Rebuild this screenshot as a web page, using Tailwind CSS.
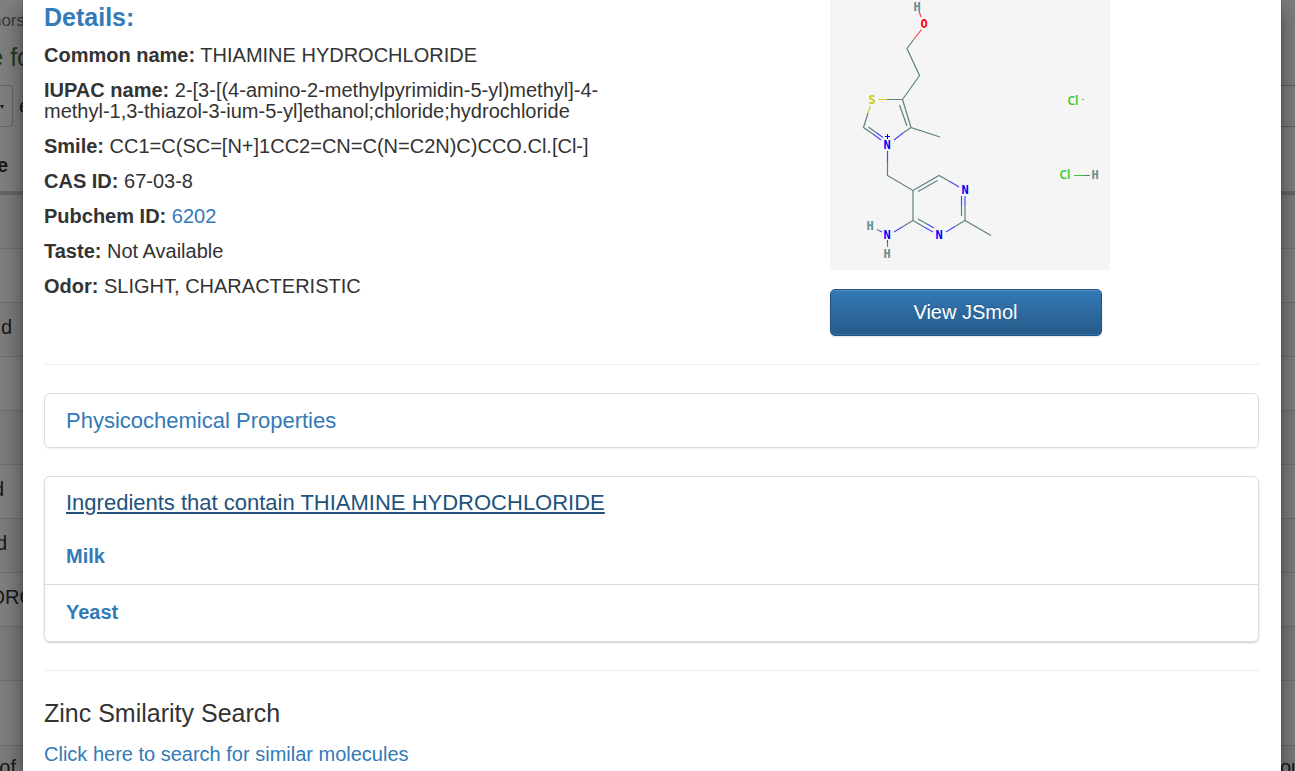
<!DOCTYPE html>
<html lang="en">
<head>
<meta charset="utf-8">
<meta name="viewport" content="width=device-width, initial-scale=1">
<title>Thiamine hydrochloride</title>
<script src="https://cdn.jsdelivr.net/npm/@tailwindcss/browser@4"></script>
</head>
<body class="relative h-screen overflow-hidden bg-white font-['Liberation_Sans',Arial,sans-serif] text-[20px] leading-[21px] text-[#333]">

<!-- Page behind the dialog -->
<div class="overflow-hidden whitespace-nowrap" aria-hidden="true">
  <div class="flex h-10 w-[25px] items-center justify-end text-[17px] text-[#777]">hors</div>
  <div class="flex h-[34px] w-[31px] items-center justify-end text-[25px] text-[#3c763d]">e fo</div>
  <div class="flex h-[53px] items-center gap-[6px] pt-[11px]">
    <div class="flex h-[42px] w-[13px] items-center rounded-r border border-l-0 border-[#ccc] text-[8px]">▾</div>
    <span>e</span>
    <div class="ml-auto h-[42px] w-10 border-y border-[#bbb]"></div>
  </div>
  <div class="flex h-[68px] items-center border-b-4 border-[#ccc] pt-[13px]"><b class="flex w-[8px] justify-end">e</b></div>
  <div class="h-[54px] border-b border-[#ddd] bg-[#f9f9f9]"></div>
  <div class="h-[54px] border-b border-[#ddd]"></div>
  <div class="flex h-[54px] items-center border-b border-[#ddd] bg-[#f9f9f9] pb-[4px]"><span class="flex w-[12px] justify-end">d</span></div>
  <div class="h-[54px] border-b border-[#ddd]"></div>
  <div class="h-[54px] border-b border-[#ddd] bg-[#f9f9f9]"></div>
  <div class="flex h-[54px] items-center border-b border-[#ddd] pb-[4px]"><span class="flex w-[4px] justify-end">d</span></div>
  <div class="flex h-[54px] items-center border-b border-[#ddd] bg-[#f9f9f9] pb-[4px]"><span class="flex w-[7px] justify-end">d</span></div>
  <div class="flex h-[54px] items-center border-b border-[#ddd] pb-[4px]"><span class="flex w-[35px] justify-end">ORO</span></div>
  <div class="h-[54px] border-b border-[#ddd] bg-[#f9f9f9]"></div>
  <div class="h-[65px] border-b border-[#ddd]"></div>
  <div class="flex h-[54px] justify-between bg-[#f9f9f9] pt-[11px]"><span class="flex w-[16px] justify-end">of</span><span class="w-[15px]">ou</span></div>
</div>

<!-- Dialog -->
<div class="absolute inset-0 bg-black/50 pr-[14px] pl-[23px]">
<main role="dialog" aria-label="Details" class="min-h-full bg-white pt-[4px] pr-[22px] pl-[21px] shadow-[0_7px_21px_rgba(0,0,0,0.5),0_0_1px_rgba(0,0,0,0.6)]">
  <section class="grid grid-cols-2">
    <div class="pr-4">
      <h2 class="mb-[15px] text-[25px] leading-[26px] font-bold text-[#337ab7]">Details:</h2>
      <div class="flex flex-col gap-[14px]">
        <p><b>Common name:</b> THIAMINE HYDROCHLORIDE</p>
        <p><b>IUPAC name:</b> 2-[3-[(4-amino-2-methylpyrimidin-5-yl)methyl]-4-methyl-1,3-thiazol-3-ium-5-yl]ethanol;chloride;hydrochloride</p>
        <p><b>Smile:</b> CC1=C(SC=[N+]1CC2=CN=C(N=C2N)C)CCO.Cl.[Cl-]</p>
        <p><b>CAS ID:</b> 67-03-8</p>
        <p><b>Pubchem ID:</b> <a href="#" class="text-[#337ab7]">6202</a></p>
        <p><b>Taste:</b> Not Available</p>
        <p><b>Odor:</b> SLIGHT, CHARACTERISTIC</p>
      </div>
    </div>
    <div class="-mt-[4px] pl-[178px]">
      <svg class="block h-[270px] w-[280px] bg-[#f5f5f5]" viewBox="0 0 280 270" role="img" aria-label="Structure of thiamine hydrochloride">
        <g fill="none" stroke="#5f8080" stroke-width="1.2">
          <path d="M84.500 38.500L77 48.500L89.500 75.500L72.500 99.500L81 127.500L110 137M72.500 99.500H57M69.500 105L77 126M38 113L33.500 127.500L43 134M38.500 127L46 132.500M81 127.500L73 133M57.500 162V175.500L83 190.500V220.500L73 226.500M83 190.500L109 175.500L119 181M88 191.500L107.500 180.500M135 206V220.500L125 226.500M131.500 206V216M135 220.500L161 235.500M83 220.500L94 227M88 219L97 224M47 229.500L50 231M57.500 243V247M253 175.500H260"/>
          <path stroke="#d0d020" d="M57 99.500H48.500M40.500 106L38 113"/>
          <path stroke="#ff4040" d="M91.500 29.500L84.500 38.500M90 14L91 17"/>
          <path stroke="#5f8080" d="M89 11L90 14"/>
          <path stroke="#4848ff" d="M43 134L51 140M46 132.500L53 137.500M73 133L64 140M57.500 151V162M119 181L129 187M135 196V206M131.500 196V206M125 226.500L116 232M94 227L103 232M97 224L104 228M73 226.500L64 232M50 231L52 232M57.500 240V243"/>
          <path stroke="#35cc35" d="M244 175.500H253M252 99.500H254"/>
        </g>
        <g class="font-['DejaVu_Sans_Mono',monospace] text-[12px] font-bold" text-anchor="middle">
          <g fill="#5f8f8f"><text x="87" y="11">H</text><text x="40" y="230">H</text><text x="57" y="258">H</text><text x="265" y="179">H</text></g>
          <text x="94" y="28" fill="#f00">O</text>
          <text x="42" y="104" fill="#cccc00">S</text>
          <g fill="#00f"><text x="57" y="149">N</text><text x="57" y="239">N</text><text x="135" y="194">N</text><text x="109" y="239">N</text></g>
          <g class="font-['Noto_Sans',sans-serif] font-semibold" fill="#35cc35"><text x="243" y="105">Cl</text><text x="235" y="179">Cl</text></g>
        </g>
        <path stroke="#00f" stroke-width="1" d="M55 136.500H60M57.500 134V139"/>
      </svg>
      <button type="button" class="mt-[19px] h-[47px] w-[272px] rounded-[5px] border border-[#245580] bg-linear-to-b from-[#337ab7] to-[#265a88] text-white shadow-[inset_0_1px_0_rgba(255,255,255,0.15),inset_0_-1px_0_#2f72ad,0_1px_2px_rgba(0,0,0,0.12)] [text-shadow:0_-1px_0_rgba(0,0,0,0.2)]">View JSmol</button>
    </div>
  </section>

  <hr class="mt-[28px] mb-[28px] border-[#eee]">

  <section class="mb-[28px] rounded-[6px] border border-[#ddd] px-[21px] py-[14px] shadow-[0_1px_2px_rgba(0,0,0,0.07)]">
    <h4 class="text-[22px] leading-[25px]"><a href="#" class="text-[#337ab7]">Physicochemical Properties</a></h4>
  </section>

  <section class="rounded-[6px] border border-[#ddd] shadow-[0_1px_2px_rgba(0,0,0,0.2)]">
    <h4 class="px-[21px] pt-[13px] pb-[13px] text-[22px] leading-[25px]"><a href="#" class="text-[#23527c] underline">Ingredients that contain THIAMINE HYDROCHLORIDE</a></h4>
    <ul class="font-bold">
      <li class="border-b border-[#ddd] px-[21px] pt-[18px] pb-[17px]"><a href="#" class="text-[#337ab7]">Milk</a></li>
      <li class="px-[21px] pt-[17px] pb-[18px]"><a href="#" class="text-[#337ab7]">Yeast</a></li>
    </ul>
  </section>

  <hr class="mt-[28px] mb-[28px] border-[#eee]">

  <h3 class="mb-[17px] text-[25px] leading-[28px]">Zinc Smilarity Search</h3>
  <p><a href="#" class="text-[#337ab7]">Click here to search for similar molecules</a></p>
</main>
</div>
</body>
</html>
